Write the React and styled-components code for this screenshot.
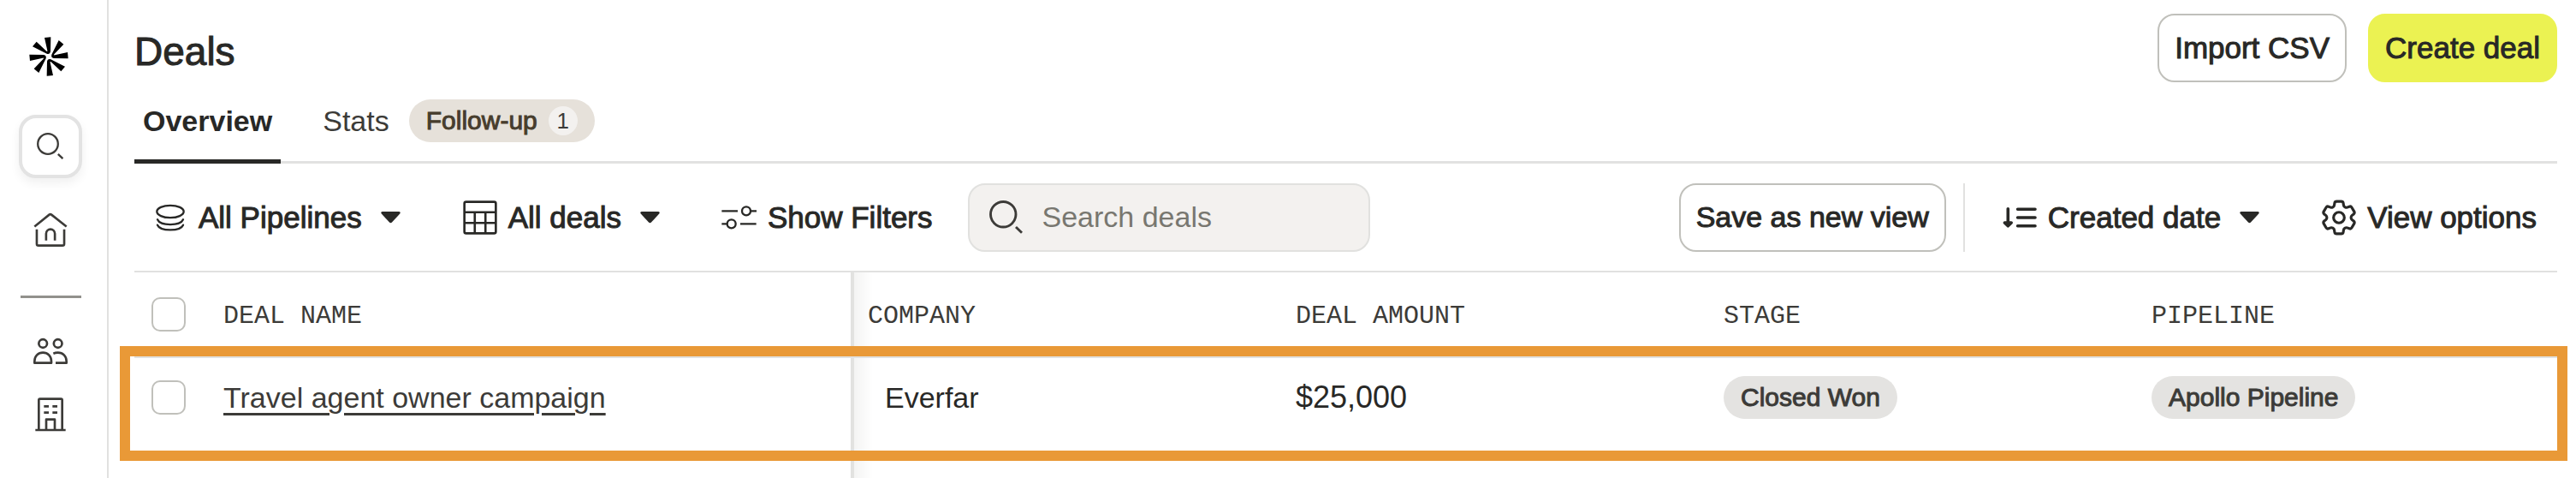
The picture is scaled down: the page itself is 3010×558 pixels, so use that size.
import React, { useState } from 'react';
import styled, { createGlobalStyle } from 'styled-components';
import { HiOutlineCog6Tooth } from 'react-icons/hi2';

const deals = [
  {
    id: 1,
    name: 'Travel agent owner campaign',
    company: 'Everfar',
    amount: '$25,000',
    stage: 'Closed Won',
    pipeline: 'Apollo Pipeline',
  },
];

const Logo = () => {
  const arm =
    'M96 42 L118 40 L117 90 Q115 101 104 98 L54 73 L68 56 L103 89 Q107 92 106 87 Z';
  return (
    <svg width="50" height="46" viewBox="36 39 150 138" fill="#000">
      {[0, 90, 180, 270].map((angle) => (
        <path key={angle} d={arm} transform={`rotate(${angle} 111 108)`} />
      ))}
    </svg>
  );
};

const SearchIcon = ({ size }) => (
  <svg width={size} height={size} viewBox="0 0 32 32" fill="none" stroke="#3c3b38" strokeWidth="2.3">
    <circle cx="13" cy="13" r="11.8" />
    <path d="M24.8 24.8 L30.4 30.2" />
  </svg>
);

const HomeIcon = () => (
  <svg width="40" height="40" viewBox="57 37 121 121" fill="none" stroke="currentColor" strokeWidth="8">
    <path d="M61 87 L113 45 Q117 42 121 45 L174 87" />
    <path d="M69 97 V148 Q69 154 75 154 H160 Q166 154 166 148 V97" />
    <path d="M102 136 V112 A15.5 15.5 0 0 1 133 112 V136" />
  </svg>
);

const PeopleIcon = () => (
  <svg width="40" height="32" viewBox="117 344 120 96" fill="none" stroke="currentColor" strokeWidth="8" strokeLinejoin="round">
    <circle cx="150.5" cy="365" r="14.5" />
    <circle cx="203" cy="365" r="14.5" />
    <path d="M121 433 V427 C121 409 134 397 150.5 397 C167 397 180 409 180 427 V433 Z" />
    <path d="M187 400 Q194 397 203 397 C220 397 233 409 233 427 V433 H195" />
  </svg>
);

const BuildingIcon = () => (
  <svg width="38" height="42" viewBox="120 552 114 126" fill="none" stroke="currentColor" strokeWidth="8">
    <path d="M136 669 V564 Q136 560 140 560 H214 Q218 560 218 564 V669" />
    <path d="M124 669 H230" />
    <path d="M154 586 H171 M184 586 H201 M154 608 H171 M184 608 H201" />
    <path d="M162 669 V632 H192 V669" strokeLinejoin="round" />
  </svg>
);

const PipelinesIcon = () => (
  <svg width="34" height="32" viewBox="126 112 102 96" fill="none" stroke="currentColor" strokeWidth="7" strokeLinecap="round">
    <ellipse cx="177" cy="139" rx="47" ry="21.5" />
    <path d="M132 167 C142 190 212 190 222 167" />
    <path d="M132 186 C142 209 212 209 222 186" />
  </svg>
);

const TableIcon = () => (
  <svg width="40" height="40" viewBox="122 99 122 122" fill="none" stroke="currentColor" strokeWidth="8">
    <rect x="127" y="104" width="112" height="112" rx="6" />
    <path d="M127 141 H239 M127 179 H239 M164 141 V216 M202 141 V216" />
  </svg>
);

const FiltersIcon = () => (
  <svg width="41" height="28" viewBox="1029 119 123 84" fill="none" stroke="currentColor" strokeWidth="7">
    <circle cx="1116" cy="138" r="15" />
    <circle cx="1064" cy="183" r="15" />
    <path d="M1030 138 H1086 M1132 138 H1152 M1030 183 H1048 M1095 183 H1151" />
  </svg>
);

const SortIcon = () => (
  <svg width="40" height="26" viewBox="0 0 40 26" fill="none" stroke="currentColor" strokeWidth="3.6" strokeLinecap="round" strokeLinejoin="round">
    <path d="M17.6 3.2 H38 M17.6 13 H38 M17.6 22.8 H38" />
    <path d="M6.3 2.8 V20" />
    <path d="M2.4 19 L6.3 22.8 L10.2 19 Z" fill="currentColor" />
  </svg>
);

const Caret = () => (
  <svg width="23" height="14" viewBox="0 0 23 14" fill="currentColor">
    <path d="M1.6 0 H21.4 Q23.8 .8 22 2.8 L13 12.6 Q11.5 14 10 12.6 L1 2.8 Q-.8 .8 1.6 0 Z" />
  </svg>
);

const App = () => {
  const [tab, setTab] = useState('overview');
  const [search, setSearch] = useState('');
  const [selected, setSelected] = useState([]);

  const toggleDeal = (id) => {
    setSelected(
      selected.includes(id)
        ? selected.filter((item) => item !== id)
        : [...selected, id],
    );
  };

  const toggleAll = (e) => {
    setSelected(e.target.checked ? deals.map((deal) => deal.id) : []);
  };

  return (
    <>
      <GlobalStyle />
      <Layout>
        <Sidebar>
          <LogoLink href="#" aria-label="Home page">
            <Logo />
          </LogoLink>
          <SidebarSearch aria-label="Search">
            <SearchIcon size={32} />
          </SidebarSearch>
          <SidebarLink href="#" aria-label="Home">
            <HomeIcon />
          </SidebarLink>
          <SidebarLine />
          <SidebarGroup>
            <SidebarLink href="#" aria-label="People">
              <PeopleIcon />
            </SidebarLink>
            <SidebarLink href="#" aria-label="Companies">
              <BuildingIcon />
            </SidebarLink>
          </SidebarGroup>
        </Sidebar>

        <Main>
          <Header>
            <Title>Deals</Title>
            <HeaderActions>
              <Button>Import CSV</Button>
              <Button $primary>Create deal</Button>
            </HeaderActions>
          </Header>

          <TabBar role="tablist">
            <Tab
              role="tab"
              aria-selected={tab === 'overview'}
              $active={tab === 'overview'}
              onClick={() => setTab('overview')}
            >
              Overview
            </Tab>
            <Tab
              role="tab"
              aria-selected={tab === 'stats'}
              $active={tab === 'stats'}
              onClick={() => setTab('stats')}
            >
              Stats
              <FollowUp>
                Follow-up
                <Count>1</Count>
              </FollowUp>
            </Tab>
          </TabBar>

          <Toolbar>
            <ToolGroup>
              <ToolButton>
                <IconBox>
                  <PipelinesIcon />
                </IconBox>
                All Pipelines
                <CaretBox>
                  <Caret />
                </CaretBox>
              </ToolButton>
              <ToolButton>
                <IconBox>
                  <TableIcon />
                </IconBox>
                All deals
                <CaretBox>
                  <Caret />
                </CaretBox>
              </ToolButton>
              <ToolButton>
                <IconBox>
                  <FiltersIcon />
                </IconBox>
                Show Filters
              </ToolButton>
            </ToolGroup>
            <SearchBox>
              <SearchIcon size={40} />
              <SearchInput
                type="text"
                aria-label="Search deals"
                placeholder="Search deals"
                value={search}
                onChange={(e) => setSearch(e.target.value)}
              />
            </SearchBox>
            <Spacer />
            <Button $compact>Save as new view</Button>
            <Divider />
            <ToolGroup>
              <ToolButton>
                <IconBox>
                  <SortIcon />
                </IconBox>
                Created date
                <CaretBox>
                  <Caret />
                </CaretBox>
              </ToolButton>
              <ToolButton>
                <IconBox>
                  <HiOutlineCog6Tooth size={42} viewBox="2 2 20 20" />
                </IconBox>
                View options
              </ToolButton>
            </ToolGroup>
          </Toolbar>

          <TableWrap>
            <Table>
              <colgroup>
                <CheckCol />
                <NameCol />
                <DataCol />
                <DataCol />
                <DataCol />
                <col />
              </colgroup>
              <thead>
                <tr>
                  <HeadCell>
                    <Checkbox
                      type="checkbox"
                      aria-label="Select all deals"
                      checked={selected.length === deals.length}
                      onChange={toggleAll}
                    />
                  </HeadCell>
                  <HeadCell $pinned>Deal name</HeadCell>
                  <HeadCell>Company</HeadCell>
                  <HeadCell>Deal amount</HeadCell>
                  <HeadCell>Stage</HeadCell>
                  <HeadCell>Pipeline</HeadCell>
                </tr>
              </thead>
              <tbody>
                {deals.map((deal) => (
                  <tr key={deal.id}>
                    <Cell>
                      <Checkbox
                        type="checkbox"
                        aria-label={`Select ${deal.name}`}
                        checked={selected.includes(deal.id)}
                        onChange={() => toggleDeal(deal.id)}
                      />
                    </Cell>
                    <Cell $pinned>
                      <DealLink href="#">{deal.name}</DealLink>
                    </Cell>
                    <Cell>
                      <Company>{deal.company}</Company>
                    </Cell>
                    <Cell>
                      <Amount>{deal.amount}</Amount>
                    </Cell>
                    <Cell>
                      <Pill>{deal.stage}</Pill>
                    </Cell>
                    <Cell>
                      <Pill>{deal.pipeline}</Pill>
                    </Cell>
                  </tr>
                ))}
              </tbody>
            </Table>
            <Highlight />
          </TableWrap>
        </Main>
      </Layout>
    </>
  );
};

export default App;

const GlobalStyle = createGlobalStyle`
  * {
    box-sizing: border-box;
  }

  body {
    margin: 0;
    background-color: #ffffff;
    color: #282826;
    font-family: 'Liberation Sans', Arial, sans-serif;
    font-size: 34px;
  }

  button,
  input {
    margin: 0;
    font-family: inherit;
  }

  svg {
    display: block;
    flex-shrink: 0;
  }
`;

const Layout = styled.div`
  display: flex;
  min-height: 100vh;
`;

const Sidebar = styled.nav`
  display: flex;
  flex-direction: column;
  flex-shrink: 0;
  padding: 43px 29px 0 22px;
  border-right: 2px solid #e1e1e0;
`;

const LogoLink = styled.a`
  width: 70px;
  display: flex;
  justify-content: center;
`;

const SidebarSearch = styled.button`
  display: flex;
  justify-content: center;
  align-items: center;
  width: 74px;
  height: 74px;
  margin: 45px 0 40px;
  padding: 0;
  border: 4px solid #e3e3e3;
  border-radius: 20px;
  background-color: white;
  box-shadow: 0 6px 12px rgba(0, 0, 0, 0.06);
`;

const SidebarLink = styled.a`
  display: flex;
  justify-content: center;
  color: #3c3b38;
`;

const SidebarLine = styled.hr`
  width: 71px;
  height: 3px;
  margin: 57px auto 46px;
  border: none;
  background-color: #92918c;
`;

const SidebarGroup = styled.div`
  display: flex;
  flex-direction: column;
  gap: 37px;
`;

const Main = styled.main`
  flex: 1;
  min-width: 0;
  padding: 16px 22px 0 30px;
`;

const Header = styled.header`
  display: flex;
  justify-content: space-between;
  align-items: center;
  height: 80px;
`;

const Title = styled.h1`
  margin: 0;
  padding-top: 8px;
  font-size: 46px;
  font-weight: normal;
  -webkit-text-stroke: 1px;
`;

const HeaderActions = styled.div`
  display: flex;
  gap: 25px;
`;

const Button = styled.button`
  height: 80px;
  padding: 0 18px;
  border: 2px solid ${(props) => (props.$primary ? '#ebf252' : '#c0c0bb')};
  border-radius: 20px;
  background-color: ${(props) => (props.$primary ? '#ebf252' : 'white')};
  color: #282826;
  font-size: ${(props) => (props.$compact ? '34px' : '35px')};
  white-space: nowrap;
  -webkit-text-stroke: 1px;
`;

const TabBar = styled.div`
  display: flex;
  gap: 39px;
  height: 95px;
  border-bottom: 3px solid #e2e2e1;
`;

const Tab = styled.button`
  display: flex;
  align-items: center;
  gap: 23px;
  height: 95px;
  padding: 0 10px;
  border: none;
  border-bottom: 5px solid
    ${(props) => (props.$active ? '#282826' : 'transparent')};
  background: none;
  color: ${(props) => (props.$active ? '#282826' : '#3c3b38')};
  font-size: 34px;
  font-weight: ${(props) => (props.$active ? 'bold' : 'normal')};
`;

const FollowUp = styled.span`
  display: flex;
  align-items: center;
  gap: 13px;
  height: 50px;
  padding: 0 20px;
  border-radius: 25px;
  background-color: #e6e1da;
  color: #473d2d;
  font-size: 30px;
  font-weight: normal;
  -webkit-text-stroke: 1px;
`;

const Count = styled.span`
  width: 34px;
  height: 34px;
  border-radius: 50%;
  background-color: #f3f1ef;
  color: #3c3b38;
  font-size: 26px;
  line-height: 34px;
  text-align: center;
  -webkit-text-stroke: 0;
`;

const Toolbar = styled.div`
  display: flex;
  align-items: center;
  height: 127px;
  padding: 0 24px 0 22px;
  border-bottom: 2px solid #e1e1e0;
`;

const ToolGroup = styled.div`
  display: flex;
  gap: 73px;
`;

const ToolButton = styled.button`
  display: flex;
  align-items: center;
  height: 80px;
  padding: 0;
  border: none;
  background: none;
  color: #282826;
  font-size: 35px;
  white-space: nowrap;
  -webkit-text-stroke: 1px;
`;

const IconBox = styled.span`
  display: flex;
  justify-content: center;
  align-items: center;
  width: 40px;
  margin-right: 13px;
`;

const CaretBox = styled.span`
  margin-left: 22px;
`;

const SearchBox = styled.label`
  display: flex;
  align-items: center;
  gap: 22px;
  width: 470px;
  height: 80px;
  margin-left: 41px;
  padding: 0 23px;
  border: 2px solid #e1e1df;
  border-radius: 20px;
  background-color: #f3f1ef;
`;

const SearchInput = styled.input`
  flex: 1;
  min-width: 0;
  padding: 0;
  border: none;
  outline: none;
  background: none;
  color: #282826;
  font-size: 34px;

  &::placeholder {
    color: #787770;
    opacity: 1;
  }
`;

const Spacer = styled.div`
  flex: 1;
`;

const Divider = styled.div`
  width: 2px;
  height: 80px;
  margin: 0 44px 0 20px;
  background-color: #e1e1e0;
`;

const TableWrap = styled.div`
  position: relative;
`;

const Table = styled.table`
  width: 100%;
  border-collapse: separate;
  border-spacing: 0;
  table-layout: fixed;
`;

const CheckCol = styled.col`
  width: 84px;
`;

const NameCol = styled.col`
  width: 753px;
`;

const DataCol = styled.col`
  width: 500px;
`;

const pinnedEdge = `
  &::after {
    content: '';
    position: absolute;
    top: 0;
    bottom: 0;
    left: 100%;
    width: 22px;
    border-left: 4px solid #e2e2e0;
    background: linear-gradient(to right, #f4f4f3, #ffffff);
  }
`;

const HeadCell = styled.th`
  position: relative;
  height: 100px;
  padding: 0 20px;
  border-bottom: 2px solid #e1e1e0;
  color: #3c3b38;
  font-family: 'Liberation Mono', 'Courier New', monospace;
  font-size: 30px;
  font-weight: normal;
  text-align: left;
  text-transform: uppercase;
  white-space: nowrap;
  ${(props) => props.$pinned && pinnedEdge}

  &:not(:first-child) {
    padding-top: 4px;
  }
`;

const Cell = styled.td`
  position: relative;
  height: 140px;
  padding: 21px 20px;
  vertical-align: top;
  line-height: 50px;
  white-space: nowrap;
  ${(props) => props.$pinned && pinnedEdge}
`;

const Checkbox = styled.input`
  appearance: none;
  display: block;
  width: 40px;
  height: 40px;
  border: 2px solid #c0c0bb;
  border-radius: 10px;
  background-color: white;

  ${Cell} & {
    margin-top: 5px;
  }

  &:checked {
    background-color: #282826;
  }
`;

const DealLink = styled.a`
  color: #3c3b38;
  text-decoration: underline;
  text-decoration-thickness: 3px;
  text-underline-offset: 6px;
`;

const Company = styled.span`
  padding-left: 20px;
`;

const Amount = styled.span`
  font-size: 36px;
`;

const Pill = styled.span`
  display: inline-block;
  height: 50px;
  padding: 0 20px;
  border-radius: 25px;
  background-color: #e4e3e1;
  color: #3c3b38;
  font-size: 30px;
  vertical-align: top;
  -webkit-text-stroke: 1px;
`;

const Highlight = styled.div`
  position: absolute;
  top: 86px;
  left: -17px;
  right: -12px;
  height: 134px;
  border: 12px solid #e99937;
  pointer-events: none;
`;
